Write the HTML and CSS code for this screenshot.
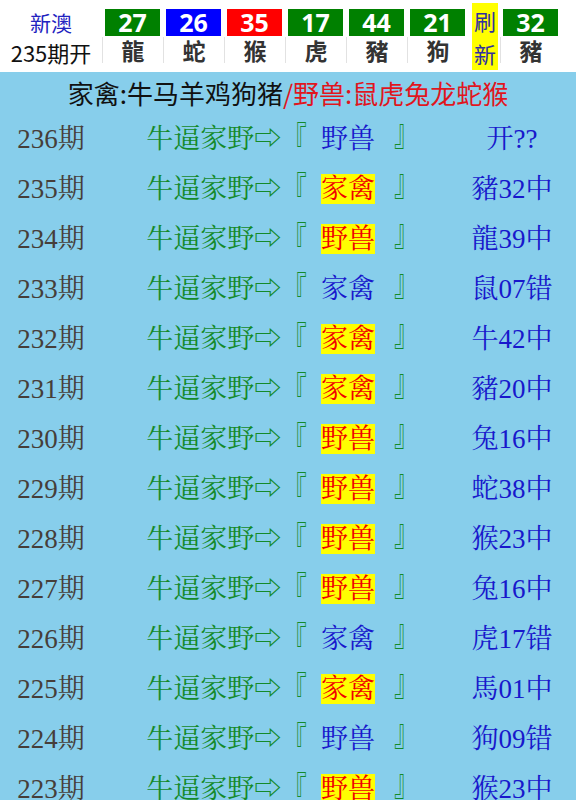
FILE: index.html
```html
<!DOCTYPE html>
<html lang="zh-CN">
<head>
    <meta charset="UTF-8">
    <meta name="viewport" content="width=device-width, initial-scale=1.0">
    <title>新澳 235期开</title>
    <link rel="stylesheet" href="styles.css">
</head>
<body>
    <div class="top">
        <div class="label">
            <div class="area">新澳</div>
            <div class="issue">235期开</div>
        </div>
        <div class="ball"><div class="num green">27</div><div class="sx">龍</div></div>
        <div class="ball"><div class="num blue">26</div><div class="sx">蛇</div></div>
        <div class="ball"><div class="num red">35</div><div class="sx">猴</div></div>
        <div class="ball"><div class="num green">17</div><div class="sx">虎</div></div>
        <div class="ball"><div class="num green">44</div><div class="sx">豬</div></div>
        <div class="ball"><div class="num green">21</div><div class="sx">狗</div></div>
        <div class="refresh"><span>刷</span><span>新</span></div>
        <div class="ball"><div class="num green">32</div><div class="sx">豬</div></div>
    </div>

    <div class="list">
        <div class="notice">家禽:牛马羊鸡狗猪<span class="wild">/野兽:鼠虎兔龙蛇猴</span></div>

        <div class="row">
            <div class="qi">236期</div>
            <div class="tip">牛逼家野⇨<span class="bk open">『</span>&nbsp;<span class="pick">野兽</span>&nbsp;<span class="bk close">』</span></div>
            <div class="res">开??</div>
        </div>
        <div class="row">
            <div class="qi">235期</div>
            <div class="tip">牛逼家野⇨<span class="bk open">『</span>&nbsp;<span class="pick hit">家禽</span>&nbsp;<span class="bk close">』</span></div>
            <div class="res">豬32中</div>
        </div>
        <div class="row">
            <div class="qi">234期</div>
            <div class="tip">牛逼家野⇨<span class="bk open">『</span>&nbsp;<span class="pick hit">野兽</span>&nbsp;<span class="bk close">』</span></div>
            <div class="res">龍39中</div>
        </div>
        <div class="row">
            <div class="qi">233期</div>
            <div class="tip">牛逼家野⇨<span class="bk open">『</span>&nbsp;<span class="pick">家禽</span>&nbsp;<span class="bk close">』</span></div>
            <div class="res">鼠07错</div>
        </div>
        <div class="row">
            <div class="qi">232期</div>
            <div class="tip">牛逼家野⇨<span class="bk open">『</span>&nbsp;<span class="pick hit">家禽</span>&nbsp;<span class="bk close">』</span></div>
            <div class="res">牛42中</div>
        </div>
        <div class="row">
            <div class="qi">231期</div>
            <div class="tip">牛逼家野⇨<span class="bk open">『</span>&nbsp;<span class="pick hit">家禽</span>&nbsp;<span class="bk close">』</span></div>
            <div class="res">豬20中</div>
        </div>
        <div class="row">
            <div class="qi">230期</div>
            <div class="tip">牛逼家野⇨<span class="bk open">『</span>&nbsp;<span class="pick hit">野兽</span>&nbsp;<span class="bk close">』</span></div>
            <div class="res">兔16中</div>
        </div>
        <div class="row">
            <div class="qi">229期</div>
            <div class="tip">牛逼家野⇨<span class="bk open">『</span>&nbsp;<span class="pick hit">野兽</span>&nbsp;<span class="bk close">』</span></div>
            <div class="res">蛇38中</div>
        </div>
        <div class="row">
            <div class="qi">228期</div>
            <div class="tip">牛逼家野⇨<span class="bk open">『</span>&nbsp;<span class="pick hit">野兽</span>&nbsp;<span class="bk close">』</span></div>
            <div class="res">猴23中</div>
        </div>
        <div class="row">
            <div class="qi">227期</div>
            <div class="tip">牛逼家野⇨<span class="bk open">『</span>&nbsp;<span class="pick hit">野兽</span>&nbsp;<span class="bk close">』</span></div>
            <div class="res">兔16中</div>
        </div>
        <div class="row">
            <div class="qi">226期</div>
            <div class="tip">牛逼家野⇨<span class="bk open">『</span>&nbsp;<span class="pick">家禽</span>&nbsp;<span class="bk close">』</span></div>
            <div class="res">虎17错</div>
        </div>
        <div class="row">
            <div class="qi">225期</div>
            <div class="tip">牛逼家野⇨<span class="bk open">『</span>&nbsp;<span class="pick hit">家禽</span>&nbsp;<span class="bk close">』</span></div>
            <div class="res">馬01中</div>
        </div>
        <div class="row">
            <div class="qi">224期</div>
            <div class="tip">牛逼家野⇨<span class="bk open">『</span>&nbsp;<span class="pick">野兽</span>&nbsp;<span class="bk close">』</span></div>
            <div class="res">狗09错</div>
        </div>
        <div class="row">
            <div class="qi">223期</div>
            <div class="tip">牛逼家野⇨<span class="bk open">『</span>&nbsp;<span class="pick hit">野兽</span>&nbsp;<span class="bk close">』</span></div>
            <div class="res">猴23中</div>
        </div>
    </div>
</body>
</html>
```

FILE: styles.css
```css
body {
    margin: 0;
    padding: 0;
    width: 576px;
    background-color: #87ceeb;
    font-family: "Noto Sans CJK SC", sans-serif;
}

.top {
    display: flex;
    height: 72px;
    background-color: #fff;
}

.label {
    width: 102px;
    text-align: center;
    font-size: 21px;
    line-height: 30px;
    padding-top: 7px;
    box-sizing: border-box;
}

.area {
    color: #2323c0;
}

.issue {
    color: #111;
    font-size: 22px;
}

.ball {
    width: 61px;
}

.num {
    margin: 9px 3px 0;
    height: 27px;
    line-height: 27px;
    text-align: center;
    color: #fff;
    font-family: "Noto Sans", sans-serif;
    font-weight: bold;
    font-size: 25px;
}

.green {
    background-color: #008000;
}

.blue {
    background-color: #0000ff;
}

.red {
    background-color: #ff0000;
}

.sx {
    height: 26px;
    line-height: 26px;
    margin-top: 1px;
    border-left: 1px solid #e2e2e2;
    text-align: center;
    color: #333;
    font-weight: bold;
    font-size: 23px;
}

.refresh {
    width: 26px;
    margin: 3px 2px 2px 4px;
    padding: 2px 0;
    background-color: #ffff00;
    color: #3030a0;
    font-size: 22px;
    line-height: 30px;
    display: flex;
    flex-direction: column;
    align-items: center;
    justify-content: space-between;
    box-sizing: border-box;
}

.notice {
    height: 39px;
    line-height: 41px;
    text-align: center;
    color: #111;
    font-size: 26px;
}

.wild {
    color: #e0161e;
}

.row {
    display: grid;
    grid-template-columns: 104px 358px 1fr;
    padding-right: 14px;
    height: 50px;
    align-items: center;
    text-align: center;
    font-family: "Liberation Serif", "Noto Serif CJK SC", "Noto Sans CJK SC", serif;
    font-size: 27px;
    white-space: nowrap;
}

.qi {
    color: #463e3a;
    margin-right: 2px;
}

.tip {
    color: #148a2a;
}

.bk {
    display: inline-block;
    font-weight: bold;
}

.bk.open {
    transform: translateY(2px) scale(0.9, 1.45);
}

.bk.close {
    margin-left: 5px;
    transform: translateY(-8px) scale(0.9, 1.45);
}

.pick {
    color: #1818cc;
    margin: 0 6px;
}

.pick.hit {
    color: #f00000;
    background-color: #ffff00;
}

.res {
    color: #1818cc;
}
```
